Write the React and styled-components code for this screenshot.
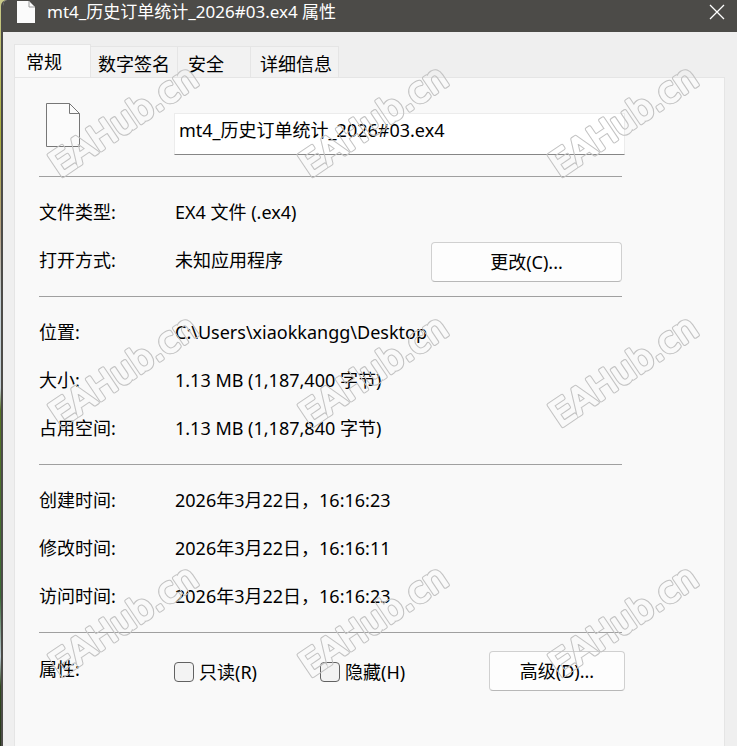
import { useState } from "react";
import styled, { createGlobalStyle } from "styled-components";

const GlobalStyle = createGlobalStyle`
  * {
    box-sizing: border-box;
  }

  body {
    margin: 0;
    background-color: #efefef;
    color: #000;
    font-family: "Noto Sans", "Noto Sans CJK SC", sans-serif;
    font-size: 18px;
    line-height: 24px;
  }

  button,
  input {
    color: inherit;
    font: inherit;
  }
`;

const Desktop = styled.div`
  position: relative;
  display: flex;
  min-height: 100vh;
  overflow: hidden;
  padding-left: 1px;
  background: linear-gradient(
    #c9c98a,
    #a9ad3c 18%,
    #b5a184 31%,
    #c3cfd4 40%,
    #c3cfd4 52%,
    #567423 55%,
    #3a6b35 80%,
    #b8c8d0 88%,
    #2f4a1c 92%,
    #26351a
  );
`;

const Window = styled.div`
  display: flex;
  flex: 1;
  flex-direction: column;
  overflow: hidden;
  border-left: 2px solid #4c4b48;
  border-top-left-radius: 6px;
  background-color: #efefef;
`;

const TitleBar = styled.header`
  display: flex;
  align-items: center;
  gap: 12px;
  height: 32px;
  padding: 0 12px 8px 14px;
  background-color: #4c4b48;
  color: #fff;
`;

const Title = styled.h1`
  flex: 1;
  margin: 0;
  font-size: 17px;
  font-weight: 400;
`;

const CloseButton = styled.button`
  display: flex;
  padding: 0;
  border: 0;
  background: none;
`;

const Body = styled.main`
  display: flex;
  flex: 1;
  flex-direction: column;
  padding: 12px 12px 0 11px;
`;

const TabList = styled.div`
  display: flex;
  align-items: flex-end;
`;

const Tab = styled.button`
  width: ${(props) => props.$width}px;
  height: ${(props) => (props.$active ? 34 : 31)}px;
  margin-bottom: ${(props) => (props.$active ? -1 : 0)}px;
  padding: ${(props) => (props.$active ? 0 : 4)}px 0 0 ${(props) => props.$indent}px;
  border: 1px solid #e5e5e5;
  border-bottom: 0;
  border-left-width: ${(props) => (props.$active ? 1 : 0)}px;
  background-color: ${(props) => (props.$active ? "#f9f9f9" : "#f2f2f2")};
  text-align: left;
`;

const Panel = styled.section`
  flex: 1;
  padding: 24px 99px 24px 24px;
  border: 1px solid #e5e5e5;
  border-bottom: 0;
  background-color: #f9f9f9;
`;

const Row = styled.div`
  display: grid;
  grid-template-columns: 136px 1fr;
  align-items: center;
`;

const FileRow = styled(Row)`
  grid-template-columns: 135px 1fr;
  align-items: start;
  margin-bottom: 21px;
`;

const NameInput = styled.input`
  width: 100%;
  height: 42px;
  margin-top: 11px;
  padding: 0 4px 10px;
  border: 1px solid #ececec;
  border-bottom-color: #868686;
  background-color: #fff;
`;

const Details = styled.dl`
  display: grid;
  gap: 24px;
  margin: 0 3px 0 0;
  padding: 23px 0 24px;
  border-top: 1px solid #a0a0a0;

  &:last-of-type {
    border-bottom: 1px solid #a0a0a0;
  }
`;

const Term = styled.dt``;

const Value = styled.dd`
  display: flex;
  align-items: center;
  justify-content: space-between;
  height: 24px;
  margin: 0;
`;

const PushButton = styled.button`
  width: ${(props) => props.$width}px;
  height: 40px;
  margin-top: 4px;
  border: 1px solid #d0d0d0;
  border-bottom-color: #b8b8b8;
  border-radius: 4px;
  background-color: #fdfdfd;
`;

const Attributes = styled.fieldset`
  display: grid;
  grid-template-columns: 135px 146px 1fr auto;
  align-items: center;
  margin: 0;
  padding: 14px 0 0;
  border: 0;
`;

const CheckLabel = styled.label`
  display: flex;
  align-items: center;
  gap: 5px;
  margin-top: 6px;
`;

const CheckBox = styled.input`
  width: 20px;
  height: 20px;
  margin: 0;
  appearance: none;
  border: 1px solid #626262;
  border-radius: 4px;
  background-color: #f3f3f3;

  &:checked {
    background-color: #005fb8;
  }
`;

const Watermarks = styled.div`
  position: absolute;
  top: 0;
  left: 0;
  display: grid;
  grid-template-columns: repeat(3, 250px);
  grid-auto-rows: 250px;
  pointer-events: none;
`;

const Mark = styled.svg`
  width: 250px;
  height: 250px;
  font-family: "DejaVu Sans", sans-serif;
  font-size: 35px;
  stroke-linejoin: round;
`;

const tabs = [
  { name: "常规", width: 77, indent: 11 },
  { name: "数字签名", width: 87, indent: 7 },
  { name: "安全", width: 73, indent: 10 },
  { name: "详细信息", width: 88, indent: 9 },
];

const location = [
  ["位置:", "C:\\Users\\xiaokkangg\\Desktop"],
  ["大小:", "1.13 MB (1,187,400 字节)"],
  ["占用空间:", "1.13 MB (1,187,840 字节)"],
];

const times = [
  ["创建时间:", "2026年3月22日，16:16:23"],
  ["修改时间:", "2026年3月22日，16:16:11"],
  ["访问时间:", "2026年3月22日，16:16:23"],
];

function DetailList({ items }) {
  return (
    <Details>
      {items.map(([term, value]) => (
        <Row key={term}>
          <Term>{term}</Term>
          <Value>{value}</Value>
        </Row>
      ))}
    </Details>
  );
}

// only the rim of a thick stroke is left, the mask takes out the letter body
function Watermark({ id }) {
  const place = "translate(60 178) rotate(-34)";

  return (
    <Mark viewBox="0 0 250 250" aria-hidden="true">
      <mask id={id} maskUnits="userSpaceOnUse" x="0" y="0" width="250" height="250">
        <rect width="250" height="250" fill="#fff" />
        <text transform={place} fill="#000" stroke="#000" strokeWidth="2">
          EAHub.cn
        </text>
      </mask>
      <g mask={`url(#${id})`}>
        <text transform={place} fill="none" stroke="#c2c2c2" strokeWidth="4">
          EAHub.cn
        </text>
      </g>
    </Mark>
  );
}

export default function App() {
  const [active, setActive] = useState("常规");
  const [fileName, setFileName] = useState("mt4_历史订单统计_2026#03.ex4");

  return (
    <Desktop>
      <GlobalStyle />
      <Window>
        <TitleBar>
          <svg width="18" height="22" viewBox="0 0 18 22">
            <path d="M0 0H12L18 6V22H0Z" fill="#fbfbfb" />
            <path d="M12 0V6H18" fill="none" stroke="#9b9b9b" />
          </svg>
          <Title>mt4_历史订单统计_2026#03.ex4 属性</Title>
          <CloseButton aria-label="关闭">
            <svg width="16" height="16" viewBox="0 0 16 16">
              <path d="M1 1L15 15M15 1L1 15" stroke="#fff" strokeWidth="1.3" />
            </svg>
          </CloseButton>
        </TitleBar>
        <Body>
          <TabList role="tablist">
            {tabs.map((tab) => (
              <Tab
                key={tab.name}
                role="tab"
                aria-selected={tab.name === active}
                $active={tab.name === active}
                $width={tab.width}
                $indent={tab.indent}
                onClick={() => setActive(tab.name)}
              >
                {tab.name}
              </Tab>
            ))}
          </TabList>
          <Panel>
            <FileRow>
              <svg width="48" height="46" viewBox="0 0 48 46">
                <path d="M7.5 1.5H30.5L40.5 11.5V44.5H7.5Z" fill="#fbfbfb" stroke="#777" />
                <path d="M30.5 1.5V11.5H40.5" fill="none" stroke="#777" />
              </svg>
              <NameInput
                aria-label="文件名"
                value={fileName}
                onChange={(e) => setFileName(e.target.value)}
              />
            </FileRow>
            <Details>
              <Row>
                <Term>文件类型:</Term>
                <Value>EX4 文件 (.ex4)</Value>
              </Row>
              <Row>
                <Term>打开方式:</Term>
                <Value>
                  未知应用程序
                  <PushButton $width={191}>更改(C)...</PushButton>
                </Value>
              </Row>
            </Details>
            <DetailList items={location} />
            <DetailList items={times} />
            <Attributes aria-label="属性">
              <span>属性:</span>
              <CheckLabel>
                <CheckBox type="checkbox" />
                只读(R)
              </CheckLabel>
              <CheckLabel>
                <CheckBox type="checkbox" />
                隐藏(H)
              </CheckLabel>
              <PushButton $width={136}>高级(D)...</PushButton>
            </Attributes>
          </Panel>
        </Body>
      </Window>
      <Watermarks>
        {Array.from({ length: 9 }, (_, i) => (
          <Watermark key={i} id={`mark-${i}`} />
        ))}
      </Watermarks>
    </Desktop>
  );
}
